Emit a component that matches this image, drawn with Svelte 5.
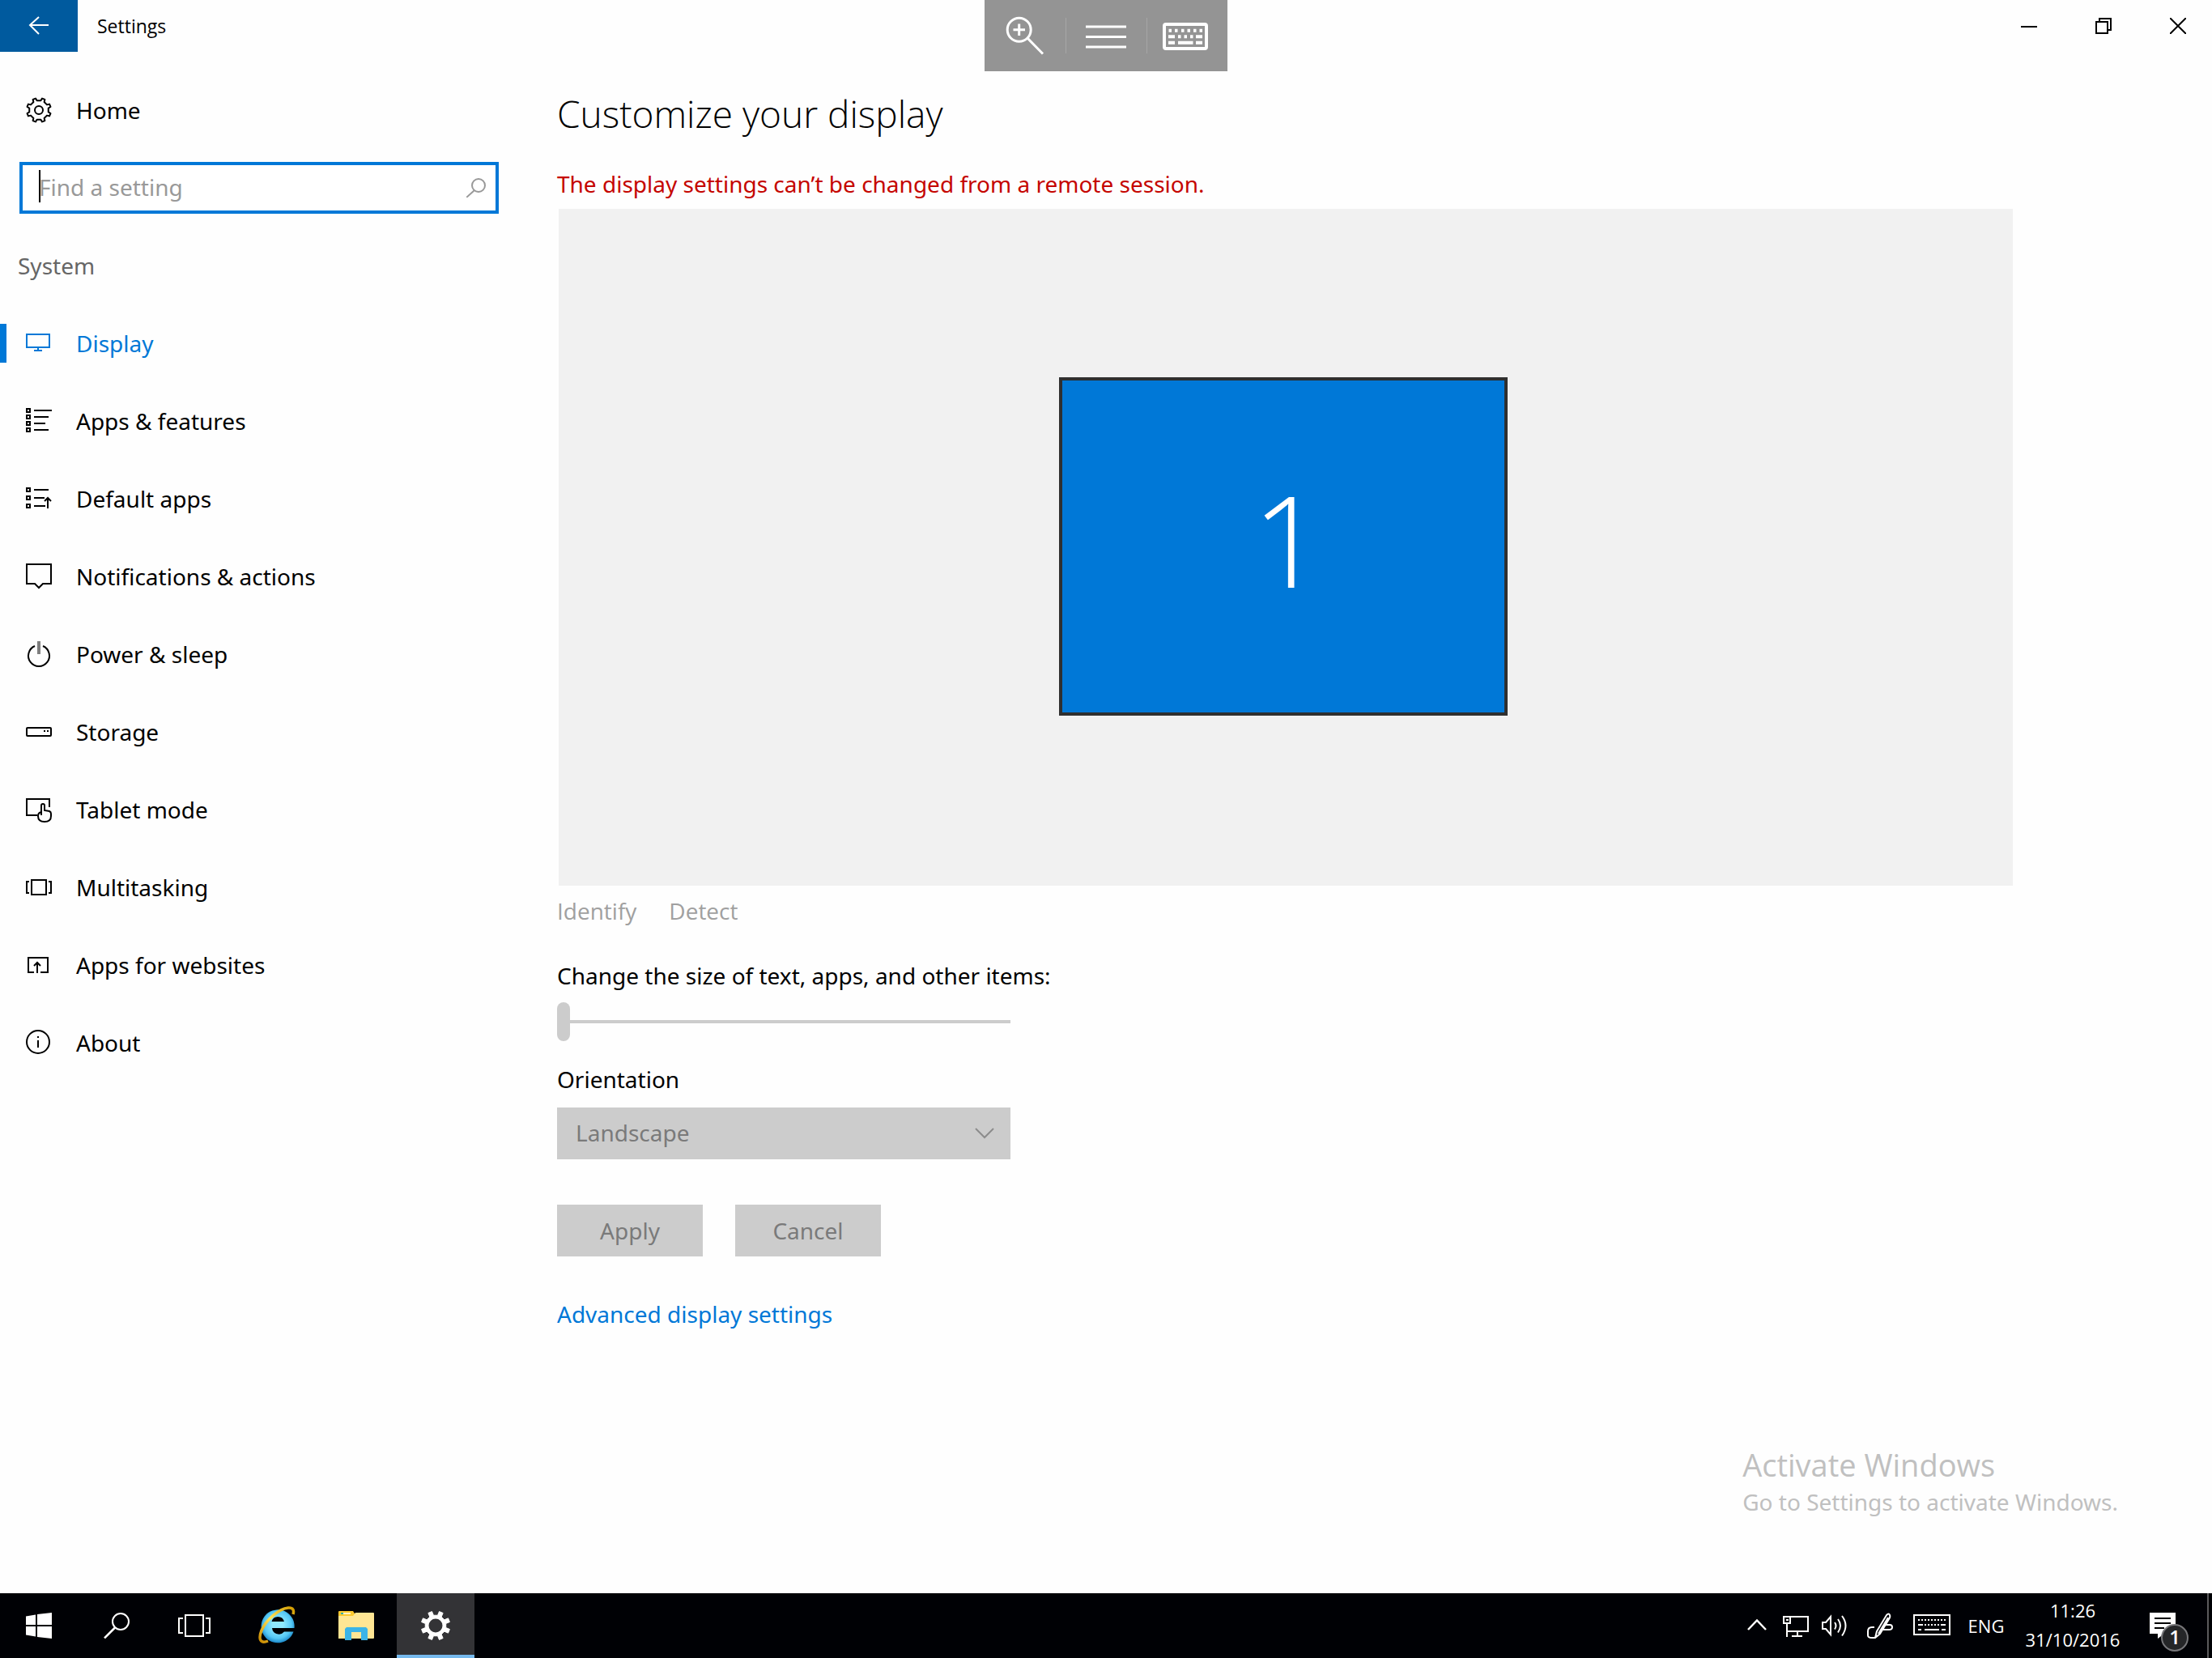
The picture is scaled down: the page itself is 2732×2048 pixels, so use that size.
<script>
  const nav = [
    { id: 'display', label: 'Display' },
    { id: 'apps', label: 'Apps & features' },
    { id: 'defaults', label: 'Default apps' },
    { id: 'notifications', label: 'Notifications & actions' },
    { id: 'power', label: 'Power & sleep' },
    { id: 'storage', label: 'Storage' },
    { id: 'tablet', label: 'Tablet mode' },
    { id: 'multitasking', label: 'Multitasking' },
    { id: 'websites', label: 'Apps for websites' },
    { id: 'about', label: 'About' },
  ];
  let current = $state('display');

  // Outline of an eight-toothed cog with a gap at twelve o'clock.
  function cog(c, outer, inner, top, base) {
    const pt = (r, deg) => {
      const a = (deg * Math.PI) / 180;
      return `${(c + r * Math.cos(a)).toFixed(2)} ${(c + r * Math.sin(a)).toFixed(2)}`;
    };
    const pts = [];
    for (let i = 0; i < 8; i++) {
      const d = i * 45 + 22.5;
      pts.push(pt(inner, d - base), pt(outer, d - top), pt(outer, d + top), pt(inner, d + base));
    }
    return `M${pts.join('L')}Z`;
  }
  const homeCog = cog(16, 15, 12, 7, 11);
  const taskCog = cog(24, 18, 13, 8, 11);
</script>

{#snippet icon(id)}
  <svg class="icon" viewBox="0 0 32 32" width="32" height="32" fill="none" stroke="currentColor" stroke-width="2" aria-hidden="true">
    {#if id === 'home'}
      <path d={homeCog} stroke-linejoin="round" /><circle cx="16" cy="16" r="5" />
    {:else if id === 'display'}
      <path d="M1 5H29V21H1ZM15 22V25M10 25H20" />
    {:else if id === 'apps'}
      <path d="M1 1H5V5H1ZM1 9H5V13H1ZM1 17H5V21H1ZM1 25H5V29H1ZM10 3H32M10 11H28M10 19H24M10 27H28" />
    {:else if id === 'defaults'}
      <path d="M1 3H5V7H1ZM1 13H5V17H1ZM1 23H5V27H1ZM10 5H28M10 15H23M10 25H24M27 28V15M23 19L27 15L31 19" />
    {:else if id === 'notifications'}
      <path d="M1 1H31V25H21L16 30L11 25H1Z" />
    {:else if id === 'power'}
      <path d="M11 6A13 13 0 1 0 21 6" /><path d="M16 0V16" stroke-width="4" opacity="0.5" />
    {:else if id === 'storage'}
      <rect x="1" y="11" width="30" height="10" rx="1" /><path d="M22 15H24M26 15H28" />
    {:else if id === 'tablet'}
      <path d="M14 23H1V3H29V13" />
      <path d="M19 23V11a2 2 0 0 1 4 0V17L29 18q2 1 2 3V24q0 7-8 7t-8-7q0-4 4-5" />
    {:else if id === 'multitasking'}
      <path d="M7 7H25V25H7ZM4 9H1V23H4M28 9H31V23H28" />
    {:else if id === 'websites'}
      <path d="M10 25H3V7H27V25H18M14 26V13M10 17L14 13L18 17" />
    {:else if id === 'about'}
      <circle cx="15" cy="15" r="14" /><path d="M15 8V10M15 13V22" />
    {/if}
  </svg>
{/snippet}

<div class="desktop">
  <div class="window">
    <header class="titlebar">
      <button class="back" aria-label="Back">
        <svg viewBox="0 0 32 32" width="32" height="32" fill="none" stroke="#fff" stroke-width="2" aria-hidden="true"><path d="M28 15H5M16 5L5 15L16 26" /></svg>
      </button>
      <span class="title">Settings</span>
      <div class="controls">
        <button aria-label="Minimize"><svg viewBox="0 0 20 20" width="20" height="20"><path d="M0 11H20" /></svg></button>
        <button aria-label="Restore"><svg viewBox="0 0 20 20" width="20" height="20"><path d="M1 5H15V19H1ZM5 5V1H19V15H15" /></svg></button>
        <button aria-label="Close"><svg viewBox="0 0 20 20" width="20" height="20"><path d="M0 0L20 20M20 0L0 20" /></svg></button>
      </div>
    </header>

    <div class="content">
      <aside class="sidebar">
        <a class="row" href="#home">{@render icon('home')}<span>Home</span></a>
        <div class="search">
          <input type="text" placeholder="Find a setting" aria-label="Find a setting" />
          <span class="caret"></span>
          <svg viewBox="0 0 24 24" width="24" height="24" fill="none" stroke="#999" stroke-width="2" aria-hidden="true"><circle cx="15" cy="9" r="8" /><path d="M10 15L0 24" /></svg>
        </div>
        <h2>System</h2>
        <nav>
          {#each nav as item (item.id)}
            <a class="row" class:active={current === item.id} href={'#' + item.id} onclick={() => (current = item.id)}>
              {@render icon(item.id)}<span>{item.label}</span>
            </a>
          {/each}
        </nav>
      </aside>

      <main>
        <h1>Customize your display</h1>
        <p class="warning">The display settings can’t be changed from a remote session.</p>
        <div class="arrangement"><div class="monitor">1</div></div>
        <div class="actions">
          <button disabled>Identify</button>
          <button disabled>Detect</button>
        </div>
        <label class="scale-label" for="scale">Change the size of text, apps, and other items:</label>
        <input class="slider" id="scale" type="range" min="0" max="4" value="0" disabled />
        <label class="orientation-label" for="orientation">Orientation</label>
        <div class="select">
          <select id="orientation" disabled><option>Landscape</option></select>
          <svg viewBox="0 0 24 14" width="24" height="14" fill="none" stroke="#8c8c8c" stroke-width="2" aria-hidden="true"><path d="M1 1L12 12L23 1" /></svg>
        </div>
        <div class="buttons">
          <button disabled>Apply</button>
          <button disabled>Cancel</button>
        </div>
        <a class="advanced" href="#advanced">Advanced display settings</a>
      </main>
    </div>

    <div class="watermark">
      <p class="big">Activate Windows</p>
      <p>Go to Settings to activate Windows.</p>
    </div>
  </div>

  <div class="remote-bar">
    <button aria-label="Zoom in">
      <svg viewBox="0 0 100 88" width="100" height="88" fill="none" stroke="#fff" stroke-width="3"><circle cx="42.7" cy="36.7" r="14.5" /><path d="M35.5 36.7H50M42.7 29.5V44M53 47L72 66.5" /></svg>
    </button>
    <button aria-label="Menu">
      <svg viewBox="0 0 100 88" width="100" height="88" fill="none" stroke="#fff" stroke-width="3"><path d="M25 33H75M25 45.5H75M25 58H75" /></svg>
    </button>
    <button aria-label="Keyboard">
      <svg viewBox="0 0 100 88" width="100" height="88" fill="none" stroke="#fff" stroke-width="4">
        <rect x="22" y="30" width="52" height="30" rx="2" />
        <path d="M27.5 37.7h3.5M35 37.7h3.5M43 37.7h3.5M50.5 37.7h3.5M58 37.7h3.5M65.5 37.7h3.5M27 45.2h8M39 45.2h3.5M46.5 45.2h3.5M54 45.2h3.5M61 45.2h8M27 52.7h8M39 52.7h18.5M61 52.7h8" />
      </svg>
    </button>
  </div>

  <footer class="taskbar">
    <div class="shell">
      <button aria-label="Start">
        <svg viewBox="0 0 32 32" width="32" height="32" fill="#fff"><path d="M0 4.500L12 2.500V15H0ZM14 2L32 0V15H14ZM0 17H12V29.500L0 27.500ZM14 17H32V32L14 30Z" /></svg>
      </button>
      <button aria-label="Search">
        <svg viewBox="0 0 32 32" width="32" height="32" fill="none" stroke="#fff" stroke-width="2"><circle cx="21" cy="11" r="10" /><path d="M14 18.500L1 31.500" stroke-width="2.500" /></svg>
      </button>
      <button aria-label="Task view">
        <svg viewBox="0 0 40 32" width="40" height="32" fill="none" stroke="#fff" stroke-width="2"><path d="M9 3H31V29H9ZM6 7H1V25H6M34 7H39V25H34" /></svg>
      </button>
    </div>
    <div class="apps">
      <button aria-label="Internet Explorer">
        <svg viewBox="0 0 48 48" width="48" height="48">
          <defs>
            <radialGradient id="ie-body" cx="0.5" cy="0.45" r="0.55"><stop offset="0.3" stop-color="#8fe9ff" /><stop offset="0.75" stop-color="#55c8f5" /><stop offset="1" stop-color="#1b87c9" /></radialGradient>
            <linearGradient id="ie-ring" x1="0" y1="1" x2="1" y2="0"><stop offset="0" stop-color="#c98a00" /><stop offset="0.5" stop-color="#ffe65a" /><stop offset="1" stop-color="#d19a00" /></linearGradient>
          </defs>
          <path fill="url(#ie-body)" fill-rule="evenodd" d="M45.500 27H18A8.500 8.500 0 0 0 33 31.500H44.500A20.500 20.500 0 1 1 45.500 27ZM17.500 19H33A8 8 0 0 0 17.500 19Z" />
          <path fill="none" stroke="url(#ie-ring)" stroke-width="3.500" d="M13 43C3 47 1 40 5 30C10 18 26 3 38 2C44 1.500 45.500 5 44 10" />
        </svg>
      </button>
      <button aria-label="File Explorer">
        <svg viewBox="0 0 48 48" width="48" height="48"><path fill="#fdc92f" d="M2 7q0-1 1-1H20L22 9V12H2Z" /><path fill="#ffe694" d="M2 12H20L23 8H45q1 0 1 1V39q0 1-1 1H2Z" /><path fill="#fff3c4" d="M8 8h9v2H8z" /><path fill="#35b1a4" d="M5 8h3v2H5z" /><path fill="#3bb4e7" d="M12 26H36l2 2V42H30V32H18V42H10V28Z" /></svg>
      </button>
      <button class="running" aria-label="Settings">
        <svg viewBox="0 0 48 48" width="48" height="48"><path fill="#fff" d={taskCog} stroke="#fff" stroke-linejoin="round" /><circle cx="24" cy="24" r="8.500" fill="#333336" /></svg>
      </button>
    </div>
    <div class="tray">
      <button aria-label="Show hidden icons"><svg viewBox="0 0 24 32" width="24" height="32"><path d="M1 21L12 9.500L23 21" stroke-width="2.500" /></svg></button>
      <button aria-label="Network"><svg viewBox="0 0 32 32" width="32" height="32"><path d="M10 5H31V23H5V15M1 5H9V13H1ZM5 13V30M18 23V29M11 29H24" /><path d="M4 9H7" /></svg></button>
      <button aria-label="Volume"><svg viewBox="0 0 32 32" width="32" height="32"><path d="M1 12H5L11 5V27L5 20H1ZM16 12Q19 16 16 20.500M20 8Q26 16 20 24.500M25 4Q34 16 25 28.500" /></svg></button>
      <button class="wide" aria-label="Windows Ink Workspace"><svg viewBox="0 0 32 32" width="32" height="32"><path d="M12 23L24 3q3-3 4 0q1 2-1 5L16 26L10 31ZM14 26L26 6M9 18H6Q1 18 1 23V28Q1 31 6 31H10M23 15H28Q31 15 31 18T27 21H20" /></svg></button>
      <button class="wide" aria-label="Touch keyboard"><svg viewBox="0 0 46 32" width="46" height="32"><path d="M1 3H45V27H1Z" /><path d="M6 9H40M6 15H40" stroke-dasharray="2 2" /><path d="M6 21H10M14 21H32M35 21H40M35 15H40M6 15H10" /></svg></button>
      <button class="lang">ENG</button>
      <button class="clock"><span>11:26</span><span>31/10/2016</span></button>
      <button class="action" aria-label="Notifications, 1 new">
        <span class="note">
          <svg viewBox="0 0 48 48" width="48" height="48"><path fill="#fff" stroke="none" d="M0 8H32V34H18L10 40V34H0Z" /><path d="M6 15H26M6 21H26M6 27H18" stroke="#000" /></svg>
          <span class="badge">1</span>
        </span>
      </button>
      <button class="peek" aria-label="Show desktop"></button>
    </div>
  </footer>
</div>

<style>
  :global(body) { background: #fefefe; }
  .desktop {
    position: relative;
    display: flex;
    flex-direction: column;
    min-height: 100vh;
    font: 28px/40px "Noto Sans", "Open Sans", sans-serif;
    color: #000;
  }
  .desktop * { box-sizing: border-box; }
  h1, h2, p { margin: 0; font-weight: 400; }
  a { color: inherit; text-decoration: none; }
  button { padding: 0; border: 0; background: none; font: inherit; color: inherit; }
  svg { display: block; flex: none; }

  .window { position: relative; flex: 1; display: flex; flex-direction: column; }
  .titlebar { display: flex; align-items: center; height: 64px; }
  .back { display: flex; align-items: center; justify-content: center; width: 96px; height: 64px; background: #005a9e; }
  .title { margin-left: 24px; font: 23px/32px "Open Sans", sans-serif; }
  .controls { display: flex; gap: 8px; margin-left: auto; }
  .controls button { display: flex; align-items: center; justify-content: center; width: 84px; height: 64px; }
  .controls path { fill: none; stroke: #000; stroke-width: 2; }

  .content { display: flex; flex: 1; }
  .sidebar { flex: none; width: 640px; padding-top: 24px; }
  .row { display: flex; align-items: center; gap: 30px; height: 96px; padding-left: 32px; }
  .row.active { color: #0078d7; background: linear-gradient(#0078d7, #0078d7) left center / 8px 48px no-repeat; }
  .search { position: relative; margin: 16px 24px 0; }
  .search input {
    display: block;
    width: 100%;
    height: 64px;
    padding: 0 64px 2px 20px;
    border: 4px solid #0078d7;
    border-radius: 0;
    outline: 0;
    background: #fff;
    font: inherit;
  }
  .search input::placeholder { color: #999; opacity: 1; }
  .caret { position: absolute; left: 24px; top: 10px; width: 2px; height: 40px; background: #000; }
  .search svg { position: absolute; right: 16px; top: 20px; }
  h2 { margin: 40px 0 24px 22px; font-size: 28px; line-height: 48px; color: #666; }

  main { flex: 1; padding: 44px 246px 0 48px; }
  h1 { font: 300 46px/64px "Open Sans", sans-serif; }
  .warning { margin-top: 35px; color: #c50500; }
  .arrangement { display: flex; justify-content: center; margin: 11px 0 11px 2px; padding: 208px 6px 210px 0; background: #f1f1f1; }
  .monitor {
    display: flex;
    align-items: center;
    justify-content: center;
    width: 554px;
    height: 418px;
    padding: 0 0 18px 12px;
    border: 4px solid #2f2f2f;
    background: #0078d7;
    color: #fff;
    font: 300 156px/160px "Open Sans", sans-serif;
  }
  .actions { display: flex; gap: 40px; font-family: "Open Sans", sans-serif; color: #a0a0a0; }
  .scale-label, .orientation-label { display: block; width: max-content; }
  .scale-label { margin-top: 40px; }
  .slider { display: block; appearance: none; width: 560px; height: 48px; margin: 13px 0 27px; background: none; }
  .slider::-webkit-slider-runnable-track { height: 4px; background: #ccc; }
  .slider::-webkit-slider-thumb { appearance: none; width: 16px; height: 48px; margin-top: -22px; border-radius: 8px; background: #ccc; }
  .select { position: relative; width: 560px; margin-top: 15px; }
  select {
    display: block;
    appearance: none;
    width: 100%;
    height: 64px;
    padding: 0 64px 2px 23px;
    border: 0;
    border-radius: 0;
    background: #ccc;
    color: #7a7a7a;
    font: inherit;
    opacity: 1;
  }
  .select svg { position: absolute; right: 20px; top: 25px; }
  .buttons { display: flex; gap: 40px; margin: 56px 0 51px; }
  .buttons button { width: 180px; height: 64px; background: #ccc; color: #7a7a7a; }
  .advanced { color: #0078d7; }

  .watermark { position: absolute; right: 116px; bottom: 91px; line-height: 44px; color: #c0c0c0; }
  .watermark .big { font: 38px/48px "Open Sans", sans-serif; }

  .remote-bar { position: absolute; top: 0; left: 50%; display: flex; transform: translateX(-50%); background: #949494; }
  .remote-bar button + button { background: linear-gradient(#a6a6a6, #a6a6a6) left center / 1px 44px no-repeat; }

  .taskbar { display: flex; height: 80px; background: #000105; color: #fff; }
  .taskbar button { display: flex; align-items: center; justify-content: center; height: 80px; }
  .shell { display: flex; }
  .apps { display: flex; gap: 2px; margin-left: 6px; }
  .shell button, .apps button { width: 96px; }
  .apps .running { background: #333336; box-shadow: inset 0 -4px #76b9ed; }
  .tray { display: flex; margin-left: auto; font: 22px/36px "Open Sans", sans-serif; }
  .tray button { width: 48px; }
  .tray svg { fill: none; stroke: #fff; stroke-width: 2; }
  .tray .wide { width: 64px; }
  .tray .lang { width: 70px; }
  .tray .clock { flex-direction: column; width: 144px; padding-bottom: 2px; }
  .tray .action { width: 94px; }
  .tray .peek { width: 6px; border-left: 2px solid #5a5a5c; }
  .note { position: relative; }
  .badge {
    position: absolute;
    left: 14px;
    top: 22px;
    width: 34px;
    height: 34px;
    border: 2px solid #77777a;
    border-radius: 50%;
    background: #252628;
    font-size: 24px;
    font-weight: 600;
    line-height: 28px;
    text-align: center;
  }
</style>
